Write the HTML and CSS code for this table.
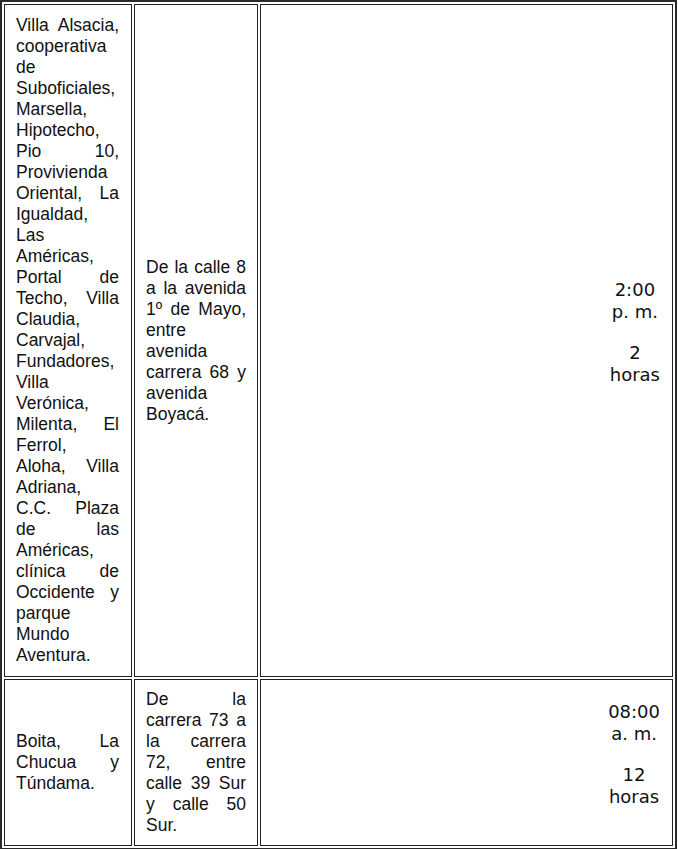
FILE: index.html
```html
<!DOCTYPE html>
<html lang="es">
<head>
<meta charset="utf-8">
<title>Horarios</title>
<link rel="stylesheet" href="styles.css">
</head>
<body>
<table class="grid">
  <tr class="row-tall">
    <td class="c1">Villa Alsacia, cooperativa de Suboficiales, Marsella, Hipotecho, Pio 10, Provivienda Oriental, La Igualdad, Las Américas, Portal de Techo, Villa Claudia, Carvajal, Fundadores, Villa Verónica, Milenta, El Ferrol, Aloha, Villa Adriana, C.C. Plaza de las Américas, clínica de Occidente y parque Mundo Aventura.</td>
    <td class="c2">De la calle 8 a la avenida 1º de Mayo, entre avenida carrera 68 y avenida Boyacá.</td>
    <td class="c3"><div class="time"><div>2:00<br>p. m.</div><div class="dur">2<br>horas</div></div></td>
  </tr>
  <tr>
    <td class="c1">Boita, La Chucua y Túndama.</td>
    <td class="c2">De la carrera 73 a la carrera 72, entre calle 39 Sur y calle 50 Sur.</td>
    <td class="c3"><div class="time"><div>08:00<br>a. m.</div><div class="dur">12<br>horas</div></div></td>
  </tr>
</table>
</body>
</html>
```

FILE: styles.css
```css
html, body {
  margin: 0;
  padding: 0;
  background: #ffffff;
}

.grid {
  width: 677px;
  table-layout: fixed;
  border-collapse: separate;
  border-spacing: 2px;
  border: 2px solid #2a2a2a;
}

.grid td {
  border: 1px solid #222222;
  vertical-align: middle;
  font-family: "Liberation Sans", Arial, sans-serif;
  font-size: 17.5px;
  line-height: 21px;
  color: #111111;
}

.c1 {
  width: 103px;
  padding: 9px 12px 9px 11px;
  text-align: justify;
}

.c2 {
  width: 100px;
  padding: 9px 11px 9px 11px;
  text-align: justify;
}

.c3 {
  padding: 9px 12px 9px 11px;
  text-align: right;
}

.row-tall td {
  padding-top: 10px;
  padding-bottom: 10px;
}

.time {
  display: inline-block;
  text-align: center;
  font-family: "DejaVu Sans", Verdana, sans-serif;
  font-size: 18px;
  line-height: 22px;
  color: #111111;
  padding-bottom: 17px;
}

.dur {
  margin-top: 19px;
}
```
